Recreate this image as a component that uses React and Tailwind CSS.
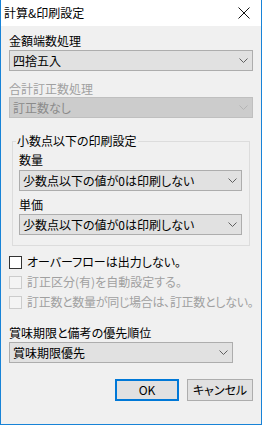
const font = { fontFamily: '"Noto Sans CJK JP", "Noto Sans", sans-serif' };

const Chevron = ({ disabled }) => (
  <svg width="9" height="5" viewBox="0 0 9 5" className="shrink-0">
    <polyline points="0.5,0.5 4.5,4.5 8.5,0.5" fill="none" stroke={disabled ? '#b4b4b4' : '#606060'} strokeWidth="1" />
  </svg>
);

const Select = ({ value, disabled, className = '' }) => (
  <div
    className={`h-[21px] flex items-center justify-between pl-[3px] pr-[4px] border ${
      disabled ? 'bg-[#cccccc] border-[#bfbfbf] text-[#8a8a8a]' : 'bg-[#e1e1e1] border-[#adadad] text-black'
    } ${className}`}
  >
    <span className="leading-[16px] whitespace-nowrap">{value}</span>
    <Chevron disabled={disabled} />
  </div>
);

const Check = ({ label, disabled, tight }) => (
  <div className="h-[20px] flex items-center gap-[5px]">
    <div className={`shrink-0 w-[13px] h-[13px] border ${disabled ? 'border-[#cccccc] bg-[#f4f4f4]' : 'border-[#333333] bg-white'}`} />
    <span
      className={`leading-[16px] whitespace-nowrap ${tight ? 'tracking-[-0.3px]' : ''} ${
        disabled ? 'text-[#a0a0a0]' : 'text-black'
      }`}
    >
      {label}
    </span>
  </div>
);

export default function App() {
  return (
    <div
      style={font}
      className="w-[262px] h-[425px] flex flex-col bg-[#f0f0f0] border-l border-r border-b border-[#1883d7] text-[12px] leading-[16px] [font-feature-settings:'palt'] overflow-hidden"
    >
      {/* タイトルバー */}
      <div className="h-[26px] shrink-0 bg-white flex items-center justify-between pl-[3px] pr-[11px]">
        <span className="text-black">計算&amp;印刷設定</span>
        <svg width="12" height="12" viewBox="0 0 12 12">
          <path d="M0.5 0.5 L11.5 11.5 M11.5 0.5 L0.5 11.5" stroke="#111" strokeWidth="1" />
        </svg>
      </div>

      <div className="px-[8px] flex flex-col">
        <div className="mt-[7px]">金額端数処理</div>
        <Select value="四捨五入" className="mt-[1px]" />

        <div className="mt-[10px] text-[#a0a0a0]">合計訂正数処理</div>
        <Select value="訂正数なし" disabled />

        <fieldset className="mt-[15px] mx-[3px] border border-[#dcdcdc] pl-[6px] pr-[7px] pt-[3px] pb-[10px]">
          <legend className="ml-[-3px] px-[1px] leading-[16px]">小数点以下の印刷設定</legend>
          <div>数量</div>
          <Select value="少数点以下の値が0は印刷しない" className="mt-[2px]" />
          <div className="mt-[6px]">単価</div>
          <Select value="少数点以下の値が0は印刷しない" className="mt-[1px]" />
        </fieldset>

        <div className="mt-[6px] flex flex-col">
          <Check label="オーバーフローは出力しない。" />
          <Check label="訂正区分(有)を自動設定する。" disabled />
          <Check label="訂正数と数量が同じ場合は、訂正数としない。" disabled tight />
        </div>

        <div className="mt-[13px]">賞味期限と備考の優先順位</div>
        <Select value="賞味期限優先" className="mt-[1px] w-[224px]" />

        <div className="mt-[16px] flex justify-end gap-[8px]">
          <button className="w-[64px] h-[22px] bg-[#e1e1e1] border-2 border-[#0078d7] text-black leading-[16px]">OK</button>
          <button className="w-[66px] h-[22px] bg-[#e1e1e1] border border-[#adadad] text-black leading-[16px]">キャンセル</button>
        </div>
      </div>
    </div>
  );
}
